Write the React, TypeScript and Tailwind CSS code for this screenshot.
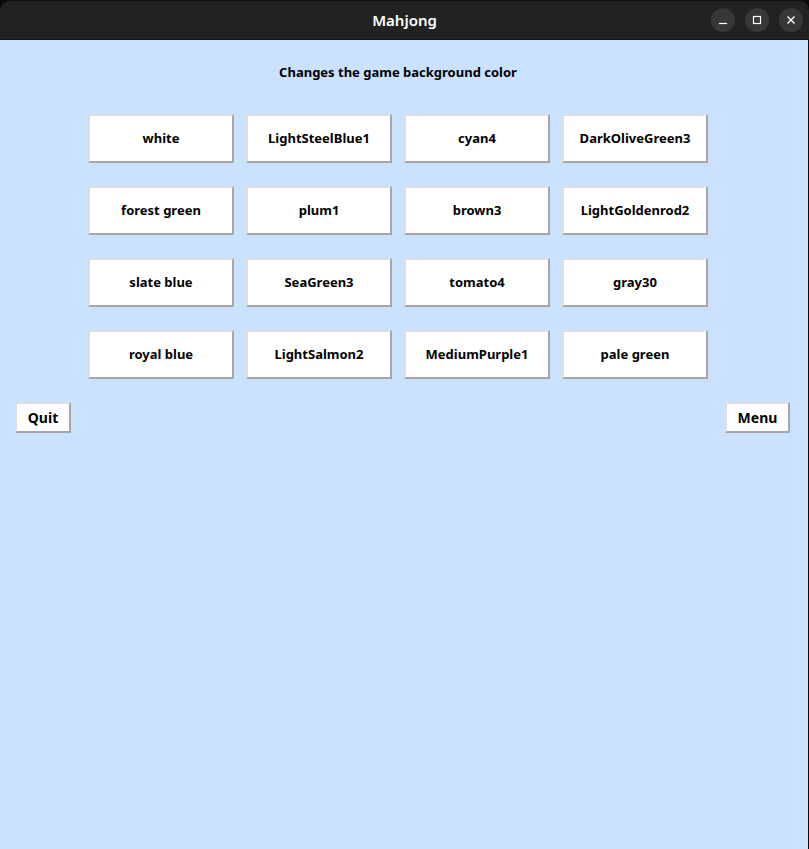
import React from 'react';

const colors = [
  'white', 'LightSteelBlue1', 'cyan4', 'DarkOliveGreen3',
  'forest green', 'plum1', 'brown3', 'LightGoldenrod2',
  'slate blue', 'SeaGreen3', 'tomato4', 'gray30',
  'royal blue', 'LightSalmon2', 'MediumPurple1', 'pale green',
];

const btn =
  'bg-white border-2 border-t-[#dedede] border-l-[#dedede] border-b-[#a6a6a6] border-r-[#a6a6a6] text-[13px] font-bold text-black flex items-center justify-center';

const TitleBar = () => (
  <div className="h-[40px] bg-[#222222] rounded-t-[10px] border-t border-[#111] border-b border-b-[#161616] flex items-center relative">
    <div className="flex-1 text-center text-white text-[15px] font-semibold">Mahjong</div>
    <div className="absolute right-[6px] top-[7px] flex gap-[10px]">
      <span className="w-[24px] h-[24px] rounded-full bg-[#383838] flex items-center justify-center">
        <svg width="10" height="10" viewBox="0 0 10 10"><path d="M1 8.5h8" stroke="#fff" strokeWidth="1.2" /></svg>
      </span>
      <span className="w-[24px] h-[24px] rounded-full bg-[#383838] flex items-center justify-center">
        <svg width="10" height="10" viewBox="0 0 10 10"><rect x="1.5" y="1.5" width="7" height="7" fill="none" stroke="#fff" strokeWidth="1.2" /></svg>
      </span>
      <span className="w-[24px] h-[24px] rounded-full bg-[#383838] flex items-center justify-center">
        <svg width="10" height="10" viewBox="0 0 10 10"><path d="M1.5 1.5l7 7M8.5 1.5l-7 7" stroke="#fff" strokeWidth="1.4" /></svg>
      </span>
    </div>
  </div>
);

export default function App() {
  return (
    <div
      className="w-[809px] h-[849px] bg-[#0a0a0a] flex flex-col overflow-hidden"
      style={{ fontFamily: '"Noto Sans", "DejaVu Sans", sans-serif' }}
    >
      <TitleBar />
      <div className="flex-1 bg-[#cae1ff] mr-[1px] flex flex-col">
        <div className="w-[796px] text-center text-[13px] font-bold text-black mt-[22px] leading-[20px]">
          Changes the game background color
        </div>
        <div className="grid grid-cols-[146px_146px_146px_146px] gap-x-[12px] gap-y-[23px] ml-[88px] mt-[32px]">
          {colors.map((c) => (
            <div key={c} className={`${btn} h-[49px]`}>{c}</div>
          ))}
        </div>
        <div className="flex justify-between mt-[23px] pl-[15px] pr-[18px]">
          <div className={`${btn} w-[56px] h-[31px] text-[14px]`}>Quit</div>
          <div className={`${btn} w-[65px] h-[31px] text-[14px]`}>Menu</div>
        </div>
      </div>
    </div>
  );
}
